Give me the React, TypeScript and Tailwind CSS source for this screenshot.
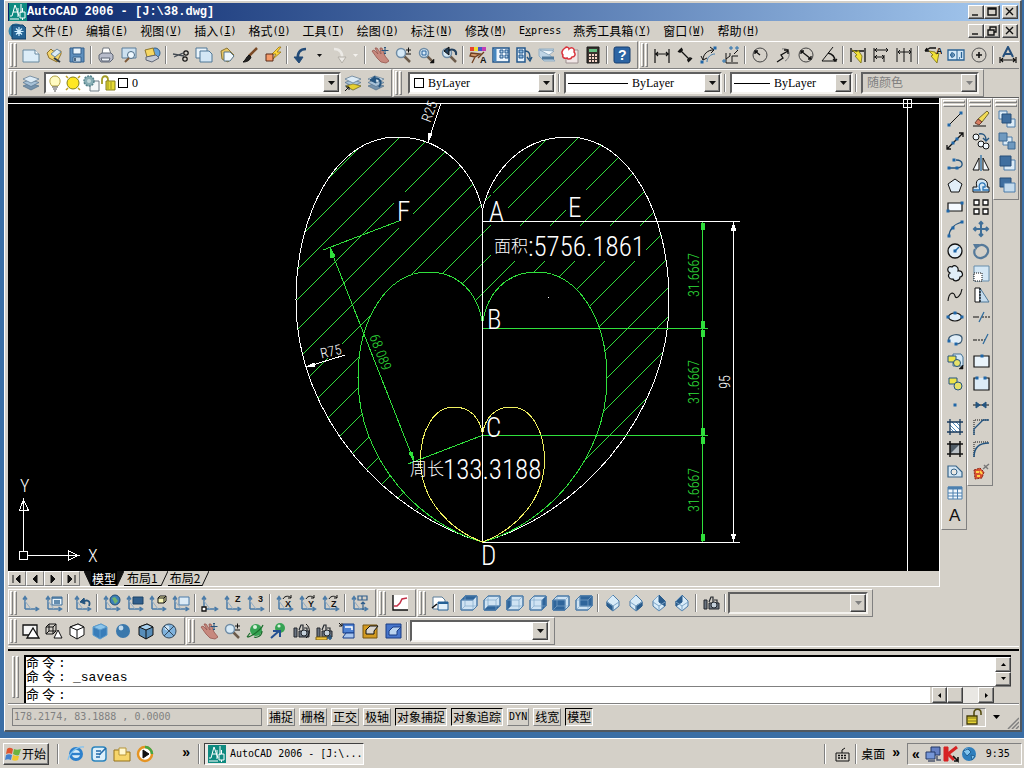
import React from "react";

const K = "#111";
const B = "#24547f";
const M = "#4a7ba8";
const L = "#cfe3f3";

type PProps = { d: string; s?: string; f?: string; w?: number; dash?: string };
const P = ({ d, s = K, f = "none", w = 1, dash }: PProps) => (
  <path d={d} stroke={s} fill={f} strokeWidth={w} strokeDasharray={dash} />
);

const Ucs = () => (
  <>
    <P d="M3 15V3M1 5.500l2-3 2 3M3 15h13M13.500 13l3 2-3 2" s={M} w={1.5} />
    <P d="M3 7l6 8" s="#8fabc4" />
  </>
);

const Cube = ({ hi }: { hi: string }) => {
  const faces: Record<string, string> = {
    top: "M1 6l4-4h12l-4 4z",
    bottom: "M1 16l4-4h12l-4 4z",
    left: "M1 6l4-4v10l-4 4z",
    right: "M13 6l4-4v10l-4 4z",
    front: "M1 6h12v10H1z",
    back: "M5 2h12v10H5z",
  };
  return (
    <>
      <P d="M1 6l4-4h12v10l-4 4H1z" f={L} s={M} />
      <P d={faces[hi]} f="#2f659b" s="#2f659b" />
      <P d="M1 6h12v10M13 6l4-4M5 2v10M5 12h12M5 12l-4 4" s="#7fa6c8" w={0.7} />
      <P d="M1 6l4-4h12v10l-4 4H1z" s={M} />
    </>
  );
};

const Iso = ({ hi }: { hi: string }) => {
  const faces: Record<string, string> = {
    sw: "M3 8l6 4v5l-6-5z",
    se: "M15 8l-6 4v5l6-5z",
    ne: "M9 1l6 6v5l-6-4z",
    nw: "M9 1L3 7v5l6-4z",
  };
  return (
    <>
      <P d="M9 1l6 6v5l-6 5-6-5V7z" f="#d8ebf8" s={M} />
      <P d={faces[hi]} f="#2a5c8c" s="#2a5c8c" />
      <P d="M3 8l6 4 6-4M9 12v5M3 7l6-6" s="#7fa6c8" />
    </>
  );
};

const Solid = ({ f, s, top }: { f: string; s: string; top: string }) => (
  <>
    <P d="M2 5l8-3 6 3v8l-7 4-7-4z" f={f} s={s} />
    <P d="M2 5l8-3 6 3-7 3z" f={top} s={s} />
    <P d="M9 8v9" s={s} />
  </>
);

const Lens = () => (
  <>
    <P d="M10 10l6 6" s="#6b5b4b" w={2.5} />
    <circle cx="7" cy="7" r="4.500" fill="#d6e9f6" stroke="#6f8ca5" strokeWidth="1.500" />
  </>
);

const Hand = () => (
  <>
    <P d="M1 5l2-1 4 4-3-6 2 0 4 6-1-6 2 0 3 8 4 5-3 2-5-1-4-4z" f="#c7897e" s="#96574f" w={0.8} />
    <P d="M14 1v7M10.500 4.500h7M13 2l1-1 1 1M13 7l1 1 1-1" s="#29547d" />
  </>
);

const Camera = () => (
  <>
    <P d="M2 6h3v9H2zM7 9h10v6H7z" f="#6a7480" s="#22272d" />
    <P d="M7 8l2-5h2v5M12 6h3v3" s="#22272d" w={1.2} />
    <circle cx="12" cy="11" r="3" fill="#c4d0da" stroke="#22272d" />
  </>
);

const Layers = () => (
  <>
    <P d="M1 12l7-3 9 3-8 4z" f="#7592ac" s="#56728c" w={0.7} />
    <P d="M1 8.500l7-3 9 3-8 4z" f="#a8c2d8" s="#56728c" w={0.7} />
    <P d="M1 5l7-3 9 3-8 4z" f="#dcebf6" s="#56728c" w={0.7} />
  </>
);

const Ball = ({ f, r = 7 }: { f: string; r?: number }) => (
  <>
    <circle cx="9" cy="9" r={r} fill={f} />
    <circle cx="7" cy="6" r={r * 0.35} fill="#e6f3fb" opacity=".8" />
  </>
);

const Dots = ({ pts }: { pts: number[][] }) => (
  <>
    {pts.map(([x, y]) => (
      <rect key={`${x}-${y}`} x={x - 1.5} y={y - 1.5} width="3" height="3" fill="#1f66a8" />
    ))}
  </>
);

const Label = ({ x, y, t }: { x: number; y: number; t: string }) => (
  <text x={x} y={y} fill={K} className="font-['Liberation_Sans'] text-[9px] font-bold">
    {t}
  </text>
);

const ACAD = (
  <>
    <rect width="18" height="18" fill="#0f8a80" />
    <P d="M1 13h2L6 2l4 11M4 9h5M1 16h9M12 1v9M9 5v9" s="#fff" />
    <P d="M11 9h5v6h-5zM13.500 15v2M13.500 5v4" s="#fff" />
  </>
);

const ICONS: Record<string, React.ReactNode> = {
  新建: <><P d="M1 4h12l4 4v8H1z" f="#dcedf8" s="#66889f" /><P d="M13 4v4h4" s="#66889f" f="#fff" /></>,
  打开: <><P d="M2 7l4-4 2 2h8v3L12 16 4 12z" f="#f3d46b" s="#8d702a" /><P d="M6 8l6-5 4 3-6 5z" f="#dcecf6" s="#6c8aa0" /><P d="M9 12l6 4" s="#303a44" w={2} /></>,
  保存: <><P d="M2 2h14v14H2z" f="#5e8fbd" s="#34618c" /><P d="M5 2h8v6H5z" f="#eaf4fb" s="#34618c" /><P d="M5 11h8v5H5z" f="#c4d8e8" s="#34618c" /><P d="M7 12v3" s="#24425f" w={1.5} /></>,
  打印: <><P d="M5 8l1-6h6l2 6z" f="#fff" s="#70777f" /><P d="M2 9l3-2h9l2 2v4l-3 3H4l-2-3z" f="#b8bccb" s="#5f6675" /><P d="M4 12h9l-1 3H5z" f="#eef2f8" s="#5f6675" /></>,
  打印预览: <><P d="M2 2h14v10H2z" f="#cde1f0" s="#5b7d99" /><circle cx="11" cy="9" r="3.500" fill="#eef8ff" stroke="#4b6a84" /><P d="M9 12l-4 4" s="#7f5a38" w={2} /></>,
  发布: <><circle cx="12" cy="7" r="5" fill="#66a3d9" stroke="#345d84" /><P d="M2 4l8-2 2 7-8 2z" f="#f6d763" s="#8d762c" /><P d="M3 11l10-2 3 3-7 4-6-2z" f="#c6cbd6" s="#5f6675" /></>,
  剪切: <><P d="M1 8l11 2M2 11l9-4" s="#444b53" w={1.3} /><circle cx="14" cy="7" r="2.200" fill="none" stroke={K} strokeWidth="1.200" /><circle cx="13" cy="13" r="2.200" fill="none" stroke={K} strokeWidth="1.200" /></>,
  复制: <><P d="M1 2h11v10H1z" f="#eaf4fb" s="#4f7796" /><P d="M5 5h9l3 3v8H5z" f="#d4e7f5" s="#4f7796" /></>,
  粘贴: <><P d="M3 5l6-3 7 7-6 7-6-3z" f="#e8c663" s="#8b7533" /><P d="M6 6h6l4 4-4 5H6z" f="#eff7fc" s="#587487" /></>,
  特性匹配: <><P d="M16 2L8 10" s="#7a4a26" w={2.5} /><P d="M8 9l2 2c-1 4-5 5-8 5 3-2 3-5 6-7z" f="#222" /></>,
  块编辑器: <><P d="M15 1L8 8h4l-3 5 8-7h-4l4-5z" f="#ffd93b" s="#9a7412" w={0.8} /><P d="M2 8h7v7H2z" f="#f49a69" s="#5b2a19" /></>,
  放弃: <><P d="M13 3C7 3 4 7 5 13" s="#234b77" w={2.6} /><P d="M1 11l5 6 4-6z" f="#234b77" s="#234b77" /></>,
  重做: <><P d="M5 3c6 0 9 4 8 10" s="#eceae6" w={2.6} /><P d="M9 11l4 6 4-6z" f="#eceae6" s="#b3afa7" /></>,
  平移: <Hand />,
  实时缩放: <><Lens /><P d="M12 4h5M14.500 1.500v5M12 8h5" /></>,
  窗口缩放: <><Lens /><P d="M5 5h4v4H5z" s="#245f99" /><P d="M17 17v-4l-4 4z" f={K} w={0.5} /></>,
  缩放上一个: <><Lens /><P d="M16 9c1-5-4-7-8-4" s="#24425f" w={2} /><P d="M9 1L4 5l5 4z" f="#24425f" /></>,
  特性: <><P d="M1 1h4v4H1z" f="#e6442f" s="none" /><P d="M5 1h4v4H5z" f="#eede31" s="none" /><P d="M9 1h4v4H9z" f="#4b53c9" s="none" /><P d="M13 1h4v4h-4z" f="#c23cb4" s="none" /><P d="M2 7l9 1-5 3-5-1zM6 11l-3 6M15 6l-6 6" f="#d49b6c" s="#704021" w={1.3} /><Label x={11} y={17} t="A" /></>,
  设计中心: <><P d="M1 2h16v14H1z" f="#eef6fd" s="#23578c" w={1.5} /><P d="M3 3v12" s="#4486bf" w={3} /><P d="M8 4h3v3H8zM13 4h3v3h-3zM8 9h3v3H8zM13 9h3v3h-3z" s="#23578c" f="#b9d3ea" /></>,
  工具选项板: <><P d="M2 2h8v14H2z" f="#e3f0fa" s="#23578c" w={1.5} /><P d="M4 4h4v3H4zM4 9h4v3H4z" s="#23578c" f="#8bb8dc" /><P d="M10 5c5 0 5 4 5 8M12 11l3 4 2-4" s={B} w={1.4} /></>,
  图纸集: <><P d="M1 3h15l-5 5 6 7H6L1 10z" f="#bfd4e4" s="#93aec3" /><P d="M2 4l14 1-5 4z" f="#f0f7fc" s="#7998b2" w={0.7} /><P d="M4 12l12 0" s="#51799b" w={3} /></>,
  标记集: <><P d="M5 4h12v13H5z" f="#f1e7e7" s="#9c8f8f" /><path d="M4 2c2-2 4 0 4 1 3-3 6 0 5 3 2 2 1 5-2 5-1 3-5 2-5 1-3 1-5-1-4-3-2-2-1-5 2-7z" fill="#fff" stroke="#d9333c" strokeWidth="1.500" /></>,
  计算器: <><P d="M3 1h12v16H3z" f="#39332f" s="#161616" /><P d="M5 3h8v3H5z" f="#65c082" s="none" /><P d="M5 9h8M5 12h8M5 15h8" s="#f4d4c8" w={2} dash="2 1" /></>,
  帮助: <><rect x="1" y="1" width="16" height="16" rx="2" fill="#2c64a3" stroke="#173f70" /><text x="5" y="14" fill="#fff" className="font-['Liberation_Sans'] text-[14px] font-bold">?</text></>,
  线性标注: <P d="M2 3v14M16 3v14M3 8h12M5 6L3 8l2 2M13 6l2 2-2 2" w={1.2} />,
  对齐标注: <P d="M2 6l4-4M12 16l4-4M4 4l10 10M4 7V4h3M14 11v3h-3" w={1.3} />,
  弧长标注: <><P d="M4 14C4 8 9 4 14 4M2 10L4 14l4-2M11 1l4 3-3 3" /><P d="M8 16c0-5 4-8 8-8" s="#477faf" /><Dots pts={[[3, 16], [16, 2]]} /></>,
  坐标标注: <><P d="M4 7v10h12M4 13l4-3v-3M10 16v-6h6M12 8l4-4" /><P d="M8 1h2v2H8zM14 1h2v2h-2zM1 14h2v2H1z" s="#2870ad" /></>,
  半径标注: <><circle cx="9" cy="9" r="7" fill="none" stroke="#444" /><P d="M9 9L4 5M4 8V5h3" w={1.4} /></>,
  折弯标注: <><P d="M8 3c9-2 9 9 3 12" s="#777" /><P d="M3 16l6-4-2-3 7-4M10 4h4v4" w={1.3} /></>,
  直径标注: <><circle cx="9" cy="9" r="7" fill="none" stroke="#444" /><P d="M4 5l10 8M4 8V5h3M14 10v3h-3" w={1.3} /></>,
  角度标注: <><P d="M13 1L2 15h15" /><P d="M8 7c4 1 7 4 7 8M13 13l2 2 2-2" w={1.3} /></>,
  快速标注: <><P d="M2 2v14M16 2v14M3 5h12" w={1.3} /><P d="M3 4l5 2 1-2 4 6-1 7-6-7 2-1z" f="#f3e237" s="#776d12" w={0.8} /></>,
  基线标注: <P d="M2 2v14M2 4h14M2 11h10M12 9v7M5 2L3 4l2 2M5 9l-2 2 2 2M14 2l2 2-2 2M10 9l2 2-2 2" />,
  连续标注: <P d="M2 2v14M9 2v14M16 2v14M3 6h12M5 4L3 6l2 2M14 4l2 2-2 2" />,
  快速引线: <><P d="M1 5l5-3h6M1 5h4M1 5l2-3" w={1.3} /><P d="M5 5l6 1 1 2 3-1-2 10-6-7 2-1z" f="#f3e237" s="#776d12" w={0.8} /><Label x={12} y={8} t="A" /></>,
  公差: <><P d="M1 4h16v10H1z" f="#d4e9f8" s="#2b6394" w={1.3} /><P d="M10 4v10M5 6v6M3 9h5" s="#2b6394" /><circle cx="5.500" cy="9" r="2" fill="none" stroke="#2b6394" /><P d="M14.500 6v6M12 12h1" s="#2b6394" w={1.3} /></>,
  圆心标记: <><circle cx="9" cy="9" r="7" fill="none" stroke="#555" /><P d="M9 6v6M6 9h6" w={1.6} /></>,
  编辑标注: <><P d="M4 11L9 1l5 10M6 8h6" s="#254f7c" w={2} /><P d="M1 11v6M17 11v6M2 14h14M4 12l-2 2 2 2M14 12l2 2-2 2" w={1.2} /></>,
  图层特性: <Layers />,
  置为当前: <><Layers /><P d="M2 12l7-2 8 2-8 4z" f="#e5cf31" s="#89791e" w={0.7} /><P d="M1 17l4-4M2 13h3v3" /></>,
  上一图层: <><Layers /><P d="M12 13c4-6-1-11-6-7" s="#24547f" w={2} /><P d="M8 2L3 6l6 3z" f="#24547f" s="#24547f" /></>,
  灯: <><path d="M6 12C2 8 4 2 9 2s7 6 3 10z" fill="#fffbc2" stroke="#b5a445" /><P d="M6 13h6M7 15h4M8 17h2" s="#555" /></>,
  太阳: <><circle cx="9" cy="9" r="6" fill="#ffe724" stroke="#84801c" /><P d="M2 2l2 2M16 2l-2 2M2 16l2-2M16 16l-2-2" s="#bd9e20" w={1.5} /></>,
  视口冻结: <><P d="M8 7h9v10H8z" f="#f5f7f8" s="#6d7b84" /><circle cx="7" cy="7" r="5" fill="#87adb4" stroke="#55838c" strokeDasharray="2 1" strokeWidth="1.500" /><circle cx="7" cy="7" r="2" fill="#c2d8da" /></>,
  锁: <><path d="M2 10V6c0-5 6-5 6 0v1" fill="none" stroke="#a49c25" strokeWidth="1.800" /><P d="M6 7h9v9H6z" f="#e5db35" s="#857e1d" /><P d="M8 8v7M11 8v7" s="#9f9623" /></>,
  金锁: <><path d="M9 8V5c0-5 7-5 7 0v2" fill="none" stroke="#554d12" strokeWidth="1.600" /><P d="M2 8h10v8H2z" f="#e7d435" s="#443d0c" w={1.3} /><P d="M3 10h8M3 13h8" s="#82781d" /></>,
  直线: <><P d="M3 15L15 3" /><Dots pts={[[3, 15], [15, 3]]} /></>,
  构造线: <><P d="M1 17L17 1M1 13v4h4M13 1h4v4" w={1.3} /><Dots pts={[[7, 11], [11, 7]]} /></>,
  多段线: <><P d="M3 14h8c7 0 7-8-1-8" s={B} w={1.3} /><Dots pts={[[3, 14], [11, 14], [8, 6]]} /></>,
  正多边形: <P d="M9 3l7 5-3 8H5L2 8z" f="#e1eef8" />,
  矩形: <><P d="M2 5h14v8H2z" f="#f5faff" w={1.2} /><Dots pts={[[2, 13], [16, 5]]} /></>,
  圆弧: <><P d="M3 16C3 10 8 4 16 2" s={B} w={1.2} /><Dots pts={[[3, 16], [7, 8], [16, 2]]} /></>,
  圆: <><circle cx="9" cy="9" r="7" fill="#e1eef8" stroke={K} strokeWidth="1.300" /><P d="M9 9l4-4" s="#2870ad" w={1.5} /><Dots pts={[[9, 9]]} /></>,
  修订云线: <path d="M4 9C0 7 2 1 6 3c3-3 7 0 6 4 5-1 6 6 2 6 0 4-6 5-7 2-4 1-6-4-3-6z" fill="#e1eef8" stroke={K} strokeWidth="1.200" />,
  样条曲线: <P d="M2 15C3 5 8 6 9 10s6 0 7-7" w={1.1} />,
  椭圆: <><ellipse cx="9" cy="9" rx="6.500" ry="4" fill="#e1eef8" stroke={K} strokeWidth="1.200" /><Dots pts={[[2, 9], [16, 9], [9, 5]]} /></>,
  椭圆弧: <><path d="M3 11C0 4 17 2 16 9c0 4-3 5-6 5" fill="#e1eef8" stroke="#3b5972" strokeWidth="1.200" /><Dots pts={[[3, 11], [10, 14]]} /></>,
  插入块: <><P d="M7 2h8l2 3v9H7z" f="#d4e7f5" s="#477395" /><P d="M2 4h8v6H2z" f="#eee34b" s={B} /><circle cx="11" cy="11" r="3.500" fill="#e7e169" stroke={B} /><P d="M17 17v-4l-4 4z" f={K} w={0.5} /></>,
  创建块: <><P d="M3 4h8v6H3z" f="#eee34b" s={B} /><circle cx="12" cy="12" r="4" fill="#e7e169" stroke={B} /></>,
  点: <Dots pts={[[9, 9]]} />,
  图案填充: <><P d="M4 4h10v10H4z" f="#fff" s="none" /><P d="M4 7l7 7M4 10l4 4M6 4l8 8M10 4l4 4" s="#528bbd" /><P d="M4 1v16M14 1v16M1 4h16M1 14h16" s="#17395c" w={1.3} /></>,
  渐变色: <><P d="M4 4h10v10H4z" f="#4f5b65" s="none" /><P d="M4 14L14 4v10z" f="#bbc2c7" s="none" /><P d="M4 1v16M14 1v16M1 4h16M1 14h16" w={1.5} /></>,
  面域: <><P d="M2 4h8l6 6v5H2z" f="#d4e7f5" s="#386589" w={1.2} /><circle cx="8" cy="10" r="3" fill="#ece9e3" stroke="#386589" /></>,
  表格: <><P d="M2 3h14v12H2z" f="#f2f8fd" s="#4d80af" /><P d="M2 4h14" s="#4d80af" w={3} /><P d="M2 9h14M2 12h14M7 3v12M11.500 3v12" s="#4d80af" /></>,
  多行文字: <text x="3" y="15" fill={K} className="font-['Liberation_Sans'] text-[17px]">A</text>,
  删除: <><P d="M1 16h13" /><P d="M15 1l2 2-7 9-4-3z" f="#f2db55" s="#6f662f" /><P d="M6 9l4 3-3 3-4-2z" f="#d77c61" s="#70402f" /></>,
  复制对象: <><circle cx="4" cy="5" r="3" fill="#f0f7fc" stroke={K} /><circle cx="9" cy="12" r="3" fill="#f0f7fc" stroke={K} /><circle cx="14" cy="14" r="3" fill="#f0f7fc" stroke={K} /><P d="M7 2c5-1 7 2 7 6M11 6l3 3 3-3" s={B} w={1.4} /></>,
  镜像: <><P d="M7 4v12H1zM11 4v12h6z" f="#f3f8fc" /><P d="M9 1v16" s="#3777ad" w={1.4} /></>,
  偏移: <><path d="M1 16v-5h4C3 5 6 3 9 3s8 2 6 8h2v5z" fill="#d4e7f5" stroke={K} /><path d="M1 14h7c-4-9 7-9 5-3h-2v3h6" fill="none" stroke="#2b74b4" strokeWidth="1.300" /></>,
  阵列: <P d="M2 2h5v5H2zM11 2h5v5h-5zM2 11h5v5H2zM11 11h5v5h-5z" f="#fff" w={1.3} />,
  移动: <P d="M9 2v14M2 9h14M7 4l2-2 2 2M7 14l2 2 2-2M4 7L2 9l2 2M14 7l2 2-2 2" s="#3f6f99" w={2} />,
  旋转: <><path d="M5 5c5-5 12 0 11 5s-9 9-13 3c-1-2-1-4 0-6" fill="none" stroke="#55799a" strokeWidth="2.200" /><P d="M1 2l7 0-4 6z" f="#55799a" s="none" /></>,
  缩放: <><P d="M2 2h15v15H2z" f="#d4e7f5" s="#668dab" /><P d="M2 9h8v8H2z" f="#fff" dash="1 1" /></>,
  拉伸: <><P d="M3 2h5v14H3z" f="#fff" /><P d="M8 2l9 14H8z" f="#c6dced" s="#4d7797" /><P d="M8 2v14" dash="2 1" w={1.2} /></>,
  修剪: <><P d="M1 9h6" /><P d="M10 9h8" dash="2 1" /><P d="M7 14L12 4" s="#2e6b9d" w={1.2} /></>,
  延伸: <><P d="M1 10h4" /><P d="M6 10h7" dash="2 1" /><P d="M11 14L16 4" s="#2e6b9d" w={1.2} /></>,
  打断于点: <><P d="M2 4h15v11H2z" f="#eaf4fb" w={1.2} /><Dots pts={[[10, 4]]} /></>,
  打断: <><P d="M5 4H2v12h15V4h-3" f="#dcebf6" w={1.2} /><Dots pts={[[5, 4], [13, 4]]} /></>,
  合并: <><P d="M1 9h16" /><P d="M4 6l4 3-4 3zM14 6l-4 3 4 3z" f={B} s={B} /></>,
  倒角: <><P d="M2 17V2h15" dash="1 1" /><P d="M2 17v-6l9-9h6" s={B} w={1.3} /></>,
  圆角: <><P d="M2 17V2h15" dash="1 1" /><P d="M2 17C2 8 7 3 17 3" s={B} w={1.5} /></>,
  分解: <><P d="M2 8l6-2 4 4-2 6-7 1z" f="#d84f2f" s="#8d291a" dash="2 1" /><P d="M4 10h3M8 9l2 3M5 14h3" s="#ffd44a" w={2} /><P d="M11 7l6-5M12 3l4 4" s="#777" w={1.4} /></>,
  前置: <><P d="M1 1h8v8H1z" f="#dcebf6" s={M} /><P d="M9 9h8v8H9z" f="#dcebf6" s={M} /><P d="M4 4h9v9H4z" f="#406f9f" s="#264e78" /></>,
  后置: <><P d="M5 5h9v8H5z" f="#dcebf6" s={M} /><P d="M1 1h8v8H1z" f="#6f99bf" s="#3f6991" /><P d="M10 10h7v7h-7z" f="#6f99bf" s="#3f6991" /></>,
  置于对象之上: <><P d="M6 6h11v10H6z" f="#dcebf6" s={M} /><P d="M2 2h11v10H2z" f="#406f9f" s="#264e78" /></>,
  置于对象之下: <><P d="M2 2h11v9H2z" f="#406f9f" s="#264e78" /><P d="M6 7h11v9H6z" f="#c4dbed" s={M} /></>,
  UCS: <Ucs />,
  命名UCS: <><Ucs /><P d="M7 3h10v8H7z" f="#eaf4fb" s="#386b97" /><P d="M7 4h10M9 7h6M9 9h6" s="#386b97" w={1.5} /></>,
  上一个UCS: <><Ucs /><P d="M15 12c2-5-2-7-6-4" s={B} w={1.8} /><P d="M10 4L6 8l5 2z" f={B} s={B} /></>,
  世界UCS: <><Ucs /><circle cx="12" cy="6" r="5" fill="#3b7fb9" stroke="#204b72" /><P d="M9 4l3-1 3 4-3 3z" f="#70b26d" s="none" /></>,
  对象UCS: <><Ucs /><P d="M7 3h10v7H7z" f="#315f8c" s="#1d4266" /></>,
  面UCS: <><Ucs /><P d="M9 4l2-2h6v5l-2 2H9z" f="#fbf8b8" /><P d="M9 4h6v5M15 4l2-2" /></>,
  视图UCS: <><Ucs /><P d="M7 3h10v8H7z" f="#dcebf6" s={M} /></>,
  原点UCS: <><Ucs /><P d="M1 13h4v4H1z" f="#fff" w={1.3} /></>,
  Z轴矢量: <><Ucs /><Label x={11} y={8} t="Z" /></>,
  三点UCS: <><Ucs /><Label x={11} y={8} t="3" /></>,
  绕X: <><Ucs /><P d="M7 5c2-4 7-3 8-1M15 1v3h-3" /><Label x={9} y={13} t="X" /></>,
  绕Y: <><Ucs /><P d="M7 5c2-4 7-3 8-1M15 1v3h-3" /><Label x={9} y={13} t="Y" /></>,
  绕Z: <><Ucs /><P d="M7 5c2-4 7-3 8-1M15 1v3h-3" /><Label x={9} y={13} t="Z" /></>,
  应用UCS: <><Ucs /><P d="M7 2h9v4H7zM11 2v4M12 16V8M10 10l2-2 2 2" s="#315f8c" w={1.2} /></>,
  曲线: <><P d="M2 1h15v15H2z" f="#fff" s="none" /><P d="M2 1v15h15" w={1.4} /><P d="M3 12h3l3-3 2-4 5-1" s="#c33147" w={1.5} /></>,
  命名视图: <><P d="M2 3h9l3 3v9H2z" f="#fff" s="#5a7d99" /><P d="M7 8h10v8H7z" f="#e3f0fa" s="#246096" /><P d="M7 9h10" s="#246096" w={2} /><P d="M1 14l5-4" w={1.6} /></>,
  俯视: <Cube hi="top" />,
  仰视: <Cube hi="bottom" />,
  左视: <Cube hi="left" />,
  右视: <Cube hi="right" />,
  主视: <Cube hi="front" />,
  后视: <Cube hi="back" />,
  西南: <Iso hi="sw" />,
  东南: <Iso hi="se" />,
  东北: <Iso hi="ne" />,
  西北: <Iso hi="nw" />,
  相机: <Camera />,
  二维线框: <><P d="M1 3h14v10H1z" f="#f6f6f6" w={1.3} /><P d="M5 16l6-10 6 10z" f="#fff" w={1.3} /></>,
  三维线框: <><P d="M1 5l3-3h7v7l-3 3H1zM1 5h7v7M8 5l3-3M4 2v7h7M4 9l-3 3" /><P d="M9 16l4-8 4 8z" f="#fff" /></>,
  消隐: <Solid f="#fff" top="#fff" s={K} />,
  平面着色: <Solid f="#397db9" top="#8cc5eb" s="#5a9bcc" />,
  体着色: <Ball f="#3a78ac" />,
  带边框平面: <Solid f="#578db9" top="#a9d1ee" s={K} />,
  带边框体: <><Ball f="#7fb2dc" /><circle cx="9" cy="9" r="7" fill="none" stroke="#34495c" /><P d="M4 4l10 10M14 4L4 14" s="#34495c" /></>,
  三维平移: <Hand />,
  三维缩放: <><Lens /><P d="M12 4h5M14.500 1.500v5M12 8h5" /></>,
  动态观察: <><circle cx="10" cy="8" r="6" fill="#36a353" /><circle cx="9" cy="5" r="2" fill="#d9f1dd" /><P d="M1 15c4 0 14-7 16-12M1 15l3-4M8 15c3 1 8-1 8-6" s="#1c6b2c" w={1.2} /></>,
  连续观察: <><circle cx="11" cy="6" r="5" fill="#36a353" /><circle cx="10" cy="4" r="1.600" fill="#d9f1dd" /><P d="M2 16l8-7M4 9h7v6" s="#234f91" w={2} /></>,
  旋转相机: <><Camera /><P d="M14 2c5 4 4 11 0 14" /></>,
  调整距离: <><Camera /><P d="M1 15h11v3H1z" f="#f1c43b" s="#7f6419" /><P d="M12 16h5M15 13v5" s={B} w={1.5} /></>,
  调整剪裁: <><P d="M5 2h11v9H5z" f="#4e82d3" s="#163d87" /><P d="M5 15l3-4h8v5H5z" f="#a9c6ee" s="#163d87" /><P d="M7 5h7v3" s="#fff" w={1.5} /><P d="M1 1l3 3M4 1v3H1" /></>,
  前向剪裁: <><P d="M2 3h14v13H2z" f="#d39b22" s="#76550e" /><P d="M5 8l4-4h8l-4 5v3H5z" f="#d9d5ce" /></>,
  后向剪裁: <><P d="M2 2h15v14H2z" f="#4675cb" s="#193d84" /><P d="M5 9l4-4h8l-4 4v4H5z" f="#b9d3ef" s="#193d84" /></>,
  浏览器: <><circle cx="9" cy="9" r="5.500" fill="#d8ecf9" stroke="#2d80cc" strokeWidth="3" /><P d="M4 9h11" s="#2d80cc" w={2.4} /><P d="M1 15C2 8 10 1 17 2" s="#82c2ef" w={1.4} /></>,
  邮件: <><rect x="2" y="2" width="14" height="14" rx="3" fill="#dceffa" stroke="#2b84bd" strokeWidth="1.500" /><P d="M6 6h5M6 9h5M6 12h4M9 10l7-7" s="#246ba9" w={1.6} /></>,
  文件夹: <><P d="M1 5h6l2 2h8v9H1z" f="#f6d56b" s="#95721c" /><P d="M6 3h7v7H6z" f="#fff7ce" s="#b79537" /></>,
  播放器: <><circle cx="9" cy="9" r="7" fill="#fff" stroke="#e59423" strokeWidth="2.500" /><path d="M9 2a7 7 0 0 1 7 7" stroke="#43a746" strokeWidth="2.500" fill="none" /><P d="M7 5l6 4-6 4z" f={K} /></>,
  键盘: <><P d="M3 8h13v8H3zM9 8V5l3-2" /><P d="M5 10.500h9M5 13h9" w={1.5} dash="2 1" /></>,
  网络: <><P d="M7 2h9v8H7z" f="#6580c3" s="#243967" /><P d="M2 7h9v7H2z" f="#7697d8" s="#243967" /><P d="M4 16h7M13 11v4h4" s="#4c566d" w={1.5} /></>,
  杀毒: <><P d="M2 2h4v14H2z" f="#d72323" s="#d72323" /><P d="M15 2L6 9l6 6" s="#d72323" w={3} /><P d="M11 11l5 5v-4M16 16h-4" w={1.6} /></>,
  地球: <><Ball f="#2f7fbd" /><P d="M3 6l5-2 3 3-4 4zM11 10l4 1-3 4z" f="#81c5ef" s="#226194" /></>,
  主页: ACAD,
  图形: <><circle cx="8" cy="9" r="7.500" fill="#3184ad" /><P d="M4 3h11l3 3v11H4z" f="#256393" s="#123e67" /><P d="M11 5v9M6.500 9.500h9M8 6.500l6 6M14 6.500l-6 6" s="#d3f0ff" w={1.2} /></>,
};

const Icon = ({ name }: { name: string }) => (
  <svg viewBox="0 0 18 18" className="block size-[18px] shrink-0" aria-hidden="true">
    {ICONS[name]}
  </svg>
);

const RAISED = "border border-t-white border-l-white border-b-[#808080] border-r-[#808080]";
const SUNKEN = "border border-t-[#808080] border-l-[#808080] border-b-white border-r-white";
const BUTTON3D =
  "border border-t-white border-l-white border-b-[#404040] border-r-[#404040] bg-[#d4d0c8] shadow-[inset_-1px_-1px_0_#808080]";

const Grip = ({ row = false }: { row?: boolean }) =>
  row ? (
    <span className="flex h-[9px] shrink-0 flex-col gap-px pt-px">
      <span className={`h-[3px] ${RAISED}`} />
      <span className={`h-[3px] ${RAISED}`} />
    </span>
  ) : (
    <span className="flex w-[10px] shrink-0 gap-px self-stretch py-px pl-px">
      <span className={`w-[3px] ${RAISED}`} />
      <span className={`w-[3px] ${RAISED}`} />
    </span>
  );

const Sep = () => (
  <span className="flex w-[6px] shrink-0 justify-center self-stretch py-1">
    <span className="w-[2px] border-l border-r border-l-[#808080] border-r-white" />
  </span>
);

const Drop = ({ label, dim = false }: { label: string; dim?: boolean }) => (
  <button aria-label={label} className="flex w-[13px] shrink-0 justify-center self-stretch items-center">
    <svg viewBox="0 0 5 3" className="h-[3px] w-[5px]">
      <path d="M0 0h5L2.500 3z" fill={dim ? "#f4f2ee" : K} />
    </svg>
  </button>
);

const Tools = ({ items }: { items: string }) => (
  <>
    {items.split(" ").map((n, i) => {
      if (n === "|") return <Sep key={i} />;
      if (n === "v") return <Drop key={i} label="放弃列表" />;
      if (n === "w") return <Drop key={i} label="重做列表" dim />;
      return (
        <button key={i} aria-label={n} className="flex h-[22px] w-[23px] shrink-0 items-center justify-center">
          <Icon name={n} />
        </button>
      );
    })}
  </>
);

const Bar = ({ children }: { children: React.ReactNode }) => (
  <div role="toolbar" className={`flex shrink-0 items-center pr-1 ${RAISED}`}>
    <Grip />
    {children}
  </div>
);

const Column = ({ items }: { items: string }) => (
  <div role="toolbar" className={`flex w-[26px] flex-col px-px pb-[3px] ${RAISED}`}>
    <Grip row />
    <Tools items={items} />
  </div>
);

const Arrow = ({ dim = false }: { dim?: boolean }) => (
  <span className={`flex w-4 shrink-0 items-center justify-center self-stretch ${BUTTON3D}`} aria-hidden="true">
    <svg viewBox="0 0 7 4" className="h-1 w-[7px]">
      <path d="M0 0h7L3.500 4z" fill={dim ? "#808080" : K} />
    </svg>
  </span>
);

type ComboProps = { label: string; value: string; width: string; dim?: boolean; children?: React.ReactNode };
const Combo = ({ label, value, width, dim = false, children }: ComboProps) => (
  <div
    className={`flex h-[22px] shrink-0 items-center border-2 border-t-[#606060] border-l-[#606060] border-b-[#f4f2ee] border-r-[#f4f2ee] ${width} ${
      dim ? "bg-[#d4d0c8] text-[#808080]" : "bg-white text-black"
    }`}
  >
    {children}
    <select
      aria-label={label}
      disabled={dim}
      className="h-[18px] min-w-0 flex-1 appearance-none bg-transparent pl-1 font-['Liberation_Serif','Noto_Sans_CJK_SC',serif] text-[12px] leading-[18px] opacity-100 outline-none"
    >
      <option>{value}</option>
    </select>
    <Arrow dim={dim} />
  </div>
);

const MENUS: [string, string][] = [
  ["文件", "F"], ["编辑", "E"], ["视图", "V"], ["插入", "I"], ["格式", "O"], ["工具", "T"], ["绘图", "D"],
  ["标注", "N"], ["修改", "M"], ["", "Express"], ["燕秀工具箱", "Y"], ["窗口", "W"], ["帮助", "H"],
];

const WinButton = ({ label, d, gap = false }: { label: string; d: string; gap?: boolean }) => (
  <button
    aria-label={label}
    className={`flex h-[14px] w-4 items-center justify-center ${BUTTON3D} ${gap ? "ml-[2px]" : ""}`}
  >
    <svg viewBox="0 0 10 10" className="size-[10px]">
      <path d={d} stroke={K} fill="none" strokeWidth="1.400" />
    </svg>
  </button>
);

const OUTER =
  "M482.500 210C476 180 450 137 397 137C335 137 296 215 296 300C296 420 390 516 482.500 542C575 516 669 420 669 300C669 215 630 137 568 137C515 137 489 180 482.500 210Z";
const MIDDLE =
  "M482.500 324C478 292 458 272 428 272C388 272 358 318 358 378C358 460 420 525 482.500 542C545 525 607 460 607 378C607 318 577 272 537 272C507 272 487 292 482.500 324Z";
const INNER =
  "M482.500 434C480 418 470 407 454 407C434 407 420.500 430 420.500 460C420.500 500 450 530 482.500 542C515 530 544.500 500 544.500 460C544.500 430 531 407 511 407C495 407 485 418 482.500 434Z";
const GAPS = "M394 192h19v36h-19zM491 193h17v33h-17zM566 190h20v28h-20zM491 226h155v35H491zM318 340h24v18h-24z";
const HATCH = Array.from({ length: 19 }, (_, k) => Math.round(507 + 29.9 * k));
const GREEN = "#30e03c";

const Drawing = () => (
  <svg
    viewBox="8 98 931 474"
    preserveAspectRatio="xMinYMin slice"
    className="block min-h-0 w-full flex-1 basis-0 bg-black font-['Roboto_Condensed','Liberation_Sans_Narrow',Roboto,'Noto_Sans_CJK_SC',sans-serif] font-light"
    role="img"
    aria-label="38.dwg"
  >
    <clipPath id="hatch">
      <path d={OUTER + MIDDLE + GAPS} clipRule="evenodd" />
    </clipPath>
    <g shapeRendering="crispEdges" fill="none" stroke="#fff">
      <g clipPath="url(#hatch)" stroke={GREEN}>
        {HATCH.map((c) => (
          <path key={c} d={`M${c - 560} 560L${c - 130} 130`} />
        ))}
      </g>
      <path d={OUTER} />
      <path d={MIDDLE} stroke={GREEN} />
      <path d="M482.500 208V542.500M482.500 221.500H740M482.500 542.500H740M733.500 222V542" />
      <path d={INNER} stroke="#f0f060" />
      <path
        d="M482.500 328.500H708M482.500 435.500H708M702.500 222V542M399 221L323 250M330 248L414 461M408 464L482 435.500"
        stroke={GREEN}
      />
      <path
        d="M701 223h3v6h-3zM701 321h3v6h-3zM701 330h3v6h-3zM701 428h3v6h-3zM701 437h3v6h-3zM701 534h3v6h-3zM330 248l1 10 4-2zM414 461l-5-8 3-1z"
        stroke={GREEN}
        fill={GREEN}
      />
      <path d="M733.500 223l-2 7h4zM733.500 541l-2-7h4zM428 142l0-9 4 1zM306 367l8-4 1 3z" fill="#fff" />
      <path d="M441 103L428 142M306 367L345 355M548 297.500h1" />
      <path d="M8 103.500H939M907.500 99V572M903.500 99.500h8v8h-8z" />
      <path d="M23.500 500V551M19.500 510.500h9l-5-11zM19.500 551.500h8v8h-8zM28 555.500H78M68.500 551v9l10-4.500z" />
    </g>
    <g fill="#fff" className="text-[27px]">
      <text x="397" y="221">F</text>
      <text x="489" y="221">A</text>
      <text x="568" y="217">E</text>
      <text x="487" y="329">B</text>
      <text x="486" y="437">C</text>
      <text x="481" y="565">D</text>
      <text x="528" y="256">:5756.1861</text>
      <text x="443" y="479">133.3188</text>
    </g>
    <g fill="#fff" className="text-[17px]">
      <text x="494" y="252">面积</text>
      <text x="410" y="475">周长</text>
    </g>
    <g fill="#fff" className="text-[18px]">
      <text x="20" y="492">Y</text>
      <text x="88" y="562">X</text>
    </g>
    <g fill={GREEN} className="text-[14px]" textAnchor="middle">
      <text transform="translate(699 275) rotate(-90)">31.6667</text>
      <text transform="translate(699 382) rotate(-90)">31.6667</text>
      <text transform="translate(699 490) rotate(-90)">31.6667</text>
      <text transform="translate(376 354) rotate(69)">68.089</text>
    </g>
    <g fill="#fff" className="text-[14px]" textAnchor="middle">
      <text transform="translate(730 382) rotate(-90)">95</text>
      <text transform="translate(332 356) rotate(-13)">R75</text>
      <text transform="translate(434 113) rotate(-70)">R25</text>
    </g>
  </svg>
);

const NAV: [string, string][] = [
  ["第一个", "M1 1v8M8 1L4 5l4 4z"],
  ["上一个", "M7 1L3 5l4 4z"],
  ["下一个", "M3 1l4 4-4 4z"],
  ["最后一个", "M9 1v8M2 1l4 4-4 4z"],
];

const Slash = ({ left, right }: { left: string; right: string }) => (
  <svg viewBox="0 0 7 15" className="h-[15px] w-[7px] shrink-0">
    <path d="M0 0h7L0 15z" fill={left} />
    <path d="M7 0v15H0z" fill={right} />
    <path d="M7 0L0 15" stroke={K} />
  </svg>
);

const STATUS: [string, boolean][] = [
  ["捕捉", false], ["栅格", false], ["正交", false], ["极轴", false], ["对象捕捉", true],
  ["对象追踪", true], ["DYN", false], ["线宽", false], ["模型", true],
];

const Prompt = () => (
  <span className="flex w-[39px] shrink-0 gap-[3px]">
    <span>命</span>
    <span>令</span>
    <span>:</span>
  </span>
);

const MONO = "font-['DejaVu_Sans_Mono','Noto_Sans_CJK_SC',monospace]";

export default function App() {
  return (
    <div className="flex min-h-screen flex-col overflow-hidden bg-[#3a6ea5] font-['Noto_Sans_CJK_SC',sans-serif] text-[12px] leading-4 text-black">
      <main className="ml-1 mr-[2px] mb-[6px] flex flex-1 flex-col border-t border-r-2 border-b-2 border-l border-t-white border-r-[#505860] border-b-[#505860] border-l-white bg-[#d4d0c8] pt-[2px] pr-px pb-px pl-[3px]">
        <header className="flex h-[18px] items-center bg-linear-to-r from-[#0a246a] to-[#a6caf0] pr-px pl-px">
          <Icon name="主页" />
          <h1 className="flex-1 font-['Liberation_Mono',monospace] text-[12px] font-bold text-white">
            AutoCAD 2006 - [J:\38.dwg]
          </h1>
          <WinButton label="最小化" d="M1 8h6" />
          <WinButton label="最大化" d="M1 1h8v7H1zM1 2h8" />
          <WinButton label="关闭" d="M1 1l7 7M8 1L1 8" gap />
        </header>
        <nav className="flex h-5 items-center pr-px">
          <Icon name="图形" />
          {MENUS.map(([zh, key]) => (
            <button key={key} className="flex shrink-0 items-center px-[6px] whitespace-nowrap">
              {zh}
              <span className={`text-[10px] ${MONO}`}>
                {zh ? (
                  <>(<u>{key}</u>)</>
                ) : (
                  <>E<u>x</u>press</>
                )}
              </span>
            </button>
          ))}
          <span className="flex-1" />
          <WinButton label="最小化图形" d="M1 8h6" />
          <WinButton label="还原图形" d="M3 4V1h6v5H7M1 4h6v5H1z" />
          <WinButton label="关闭图形" d="M1 1l7 7M8 1L1 8" gap />
        </nav>
        <div className="flex h-7 gap-px overflow-hidden">
          <Bar>
            <Tools items="新建 打开 保存 | 打印 打印预览 发布 | 剪切 复制 粘贴 特性匹配 块编辑器 | 放弃 v 重做 w | 平移 实时缩放 窗口缩放 缩放上一个 | 特性 设计中心 工具选项板 图纸集 标记集 计算器 | 帮助" />
          </Bar>
          <Bar>
            <Tools items="线性标注 对齐标注 弧长标注 坐标标注 | 半径标注 折弯标注 直径标注 角度标注 | 快速标注 基线标注 连续标注 | 快速引线 公差 圆心标记 | 编辑标注" />
          </Bar>
        </div>
        <div className="flex h-7 gap-px overflow-hidden">
          <Bar>
            <Tools items="图层特性" />
            <span className="w-[2px]" />
            <Combo label="图层" value="0" width="w-[297px]">
              <Icon name="灯" />
              <Icon name="太阳" />
              <Icon name="视口冻结" />
              <Icon name="锁" />
              <span className="size-[10px] border border-black" />
            </Combo>
            <Tools items="置为当前 上一图层" />
          </Bar>
          <Bar>
            <span className="w-1" />
            <Combo label="颜色" value="ByLayer" width="w-[148px]">
              <span className="ml-1 size-[10px] border border-black" />
            </Combo>
            <Sep />
            <span className="w-[2px]" />
            <Combo label="线型" value="ByLayer" width="w-[158px]">
              <span className="ml-[2px] h-px w-[60px] bg-black" />
            </Combo>
            <Sep />
            <span className="w-[2px]" />
            <Combo label="线宽" value="ByLayer" width="w-[123px]">
              <span className="ml-[2px] h-px w-[36px] bg-black" />
            </Combo>
            <Sep />
            <span className="w-[2px]" />
            <Combo label="打印样式" value="随颜色" width="w-[118px]" dim />
          </Bar>
        </div>
        <div className="flex flex-1 border-t border-[#606060]">
          <div className="mr-px flex min-w-0 flex-1 flex-col border-r border-b border-white">
            <Drawing />
            <div className="flex h-[15px] items-start">
              {NAV.map(([label, d]) => (
                <button key={label} aria-label={label} className={`flex h-[15px] w-[18px] items-center justify-center ${RAISED}`}>
                  <svg viewBox="0 0 10 10" className="size-[10px]">
                    <path d={d} fill={K} stroke={K} />
                  </svg>
                </button>
              ))}
              <svg viewBox="0 0 7 15" className="ml-1 h-[15px] w-[7px] shrink-0">
                <path d="M0 0h7v15z" fill={K} />
                <path d="M0 0l7 15" stroke={K} />
              </svg>
              <button className="h-[15px] bg-black px-px text-[12px] leading-[14px] text-white">模型</button>
              <Slash left={K} right="#d4d0c8" />
              <button className="h-[15px] border-b border-black px-[3px] text-[12px] leading-[14px]">布局1</button>
              <Slash left="#d4d0c8" right="#d4d0c8" />
              <button className="h-[15px] border-b border-black px-[2px] text-[12px] leading-[14px]">布局2</button>
              <Slash left="#d4d0c8" right="#d4d0c8" />
            </div>
          </div>
          <div className="flex items-start">
            <Column items="直线 构造线 多段线 正多边形 矩形 圆弧 圆 修订云线 样条曲线 椭圆 椭圆弧 插入块 创建块 点 图案填充 渐变色 面域 表格 多行文字" />
            <Column items="删除 复制对象 镜像 偏移 阵列 移动 旋转 缩放 拉伸 修剪 延伸 打断于点 打断 合并 倒角 圆角 分解" />
            <Column items="前置 后置 置于对象之上 置于对象之下" />
          </div>
        </div>
        <div className="mt-[2px] flex h-7 gap-px overflow-hidden">
          <Bar>
            <Tools items="UCS 命名UCS | 上一个UCS | 世界UCS 对象UCS 面UCS 视图UCS | 原点UCS Z轴矢量 三点UCS | 绕X 绕Y 绕Z | 应用UCS" />
          </Bar>
          <Bar>
            <Tools items="曲线" />
          </Bar>
          <Bar>
            <Tools items="命名视图 | 俯视 仰视 左视 右视 主视 后视 | 西南 东南 东北 西北 | 相机 |" />
            <Combo label="视口比例" value="" width="w-[140px]" dim />
          </Bar>
        </div>
        <div className="flex h-7 gap-px overflow-hidden">
          <Bar>
            <Tools items="二维线框 三维线框 消隐 平面着色 体着色 带边框平面 带边框体" />
          </Bar>
          <Bar>
            <Tools items="三维平移 三维缩放 动态观察 连续观察 旋转相机 调整距离 调整剪裁 前向剪裁 后向剪裁 |" />
            <Combo label="命名视图列表" value="" width="w-[140px]" />
          </Bar>
        </div>
        <section className="mt-px flex flex-col border-t border-white pt-[2px]">
          <div className="flex h-[55px] border-t-2 border-b border-t-black border-b-[#808080] pt-1 pr-2 pl-1">
            <span className="flex h-[43px] w-3 shrink-0 gap-px pt-px">
              <span className={`w-[3px] ${RAISED}`} />
              <span className={`w-[3px] ${RAISED}`} />
            </span>
            <div className="flex min-w-0 flex-1 flex-col border-t-2 border-l-2 border-t-black border-l-black font-['Liberation_Mono','Noto_Sans_CJK_SC',monospace] text-[13px] leading-[13px]">
              <div className="flex h-[30px] border-b border-[#808080] bg-white">
                <div className="flex flex-1 flex-col gap-px">
                  <p className="flex gap-2"><Prompt /></p>
                  <p className="flex gap-2"><Prompt />_saveas</p>
                </div>
                <div className="flex flex-col">
                  <button aria-label="上滚" className={`flex h-[15px] w-4 items-center justify-center ${BUTTON3D}`}>
                    <svg viewBox="0 0 5 3" className="h-[3px] w-[5px]"><path d="M0 3h5L2.500 0z" /></svg>
                  </button>
                  <button aria-label="下滚" className={`flex h-[15px] w-4 items-center justify-center ${BUTTON3D}`}>
                    <svg viewBox="0 0 5 3" className="h-[3px] w-[5px]"><path d="M0 0h5L2.500 3z" /></svg>
                  </button>
                </div>
              </div>
              <div className="flex h-4 pr-[17px]">
                <label className="flex flex-1 items-center bg-white">
                  <Prompt />
                  <input aria-label="命令" className="min-w-0 flex-1 bg-transparent outline-none" />
                </label>
                <button aria-label="左滚" className={`ml-[2px] flex w-[15px] items-center justify-center ${BUTTON3D}`}>
                  <svg viewBox="0 0 3 5" className="h-[5px] w-[3px]"><path d="M3 0v5L0 2.500z" /></svg>
                </button>
                <span className={`w-4 ${BUTTON3D}`} />
                <span className="w-[15px] bg-[#e9e7e3]" />
                <button aria-label="右滚" className={`flex w-4 items-center justify-center ${BUTTON3D}`}>
                  <svg viewBox="0 0 3 5" className="h-[5px] w-[3px]"><path d="M0 0v5l3-2.500z" /></svg>
                </button>
              </div>
            </div>
          </div>
        </section>
        <footer className="flex h-[25px] items-center gap-1 border-t border-white pl-1">
          <output className={`mr-px h-[18px] w-[250px] border border-[#808080] pl-px text-[10px] leading-4 whitespace-pre text-[#808080] ${MONO}`}>
            178.2174, 83.1888 , 0.0000
          </output>
          {STATUS.map(([name, on]) => (
            <button
              key={name}
              aria-pressed={on}
              className={`h-[18px] px-px leading-4 ${
                on ? "border border-t-black border-l-black border-b-white border-r-white" : RAISED
              } ${name === "DYN" ? "font-['DejaVu_Sans_Mono',monospace] text-[10px]" : "text-[12px]"}`}
            >
              {name}
            </button>
          ))}
          <span className="flex-1" />
          <button aria-label="工具栏锁定" className={`flex h-[19px] w-6 items-center justify-center ${SUNKEN}`}>
            <Icon name="金锁" />
          </button>
          <button aria-label="状态栏菜单" className="flex w-3 justify-center">
            <svg viewBox="0 0 7 4" className="h-1 w-[7px]"><path d="M0 0h7L3.500 4z" /></svg>
          </button>
          <svg viewBox="0 0 12 12" className="ml-px size-3 self-end">
            <path d="M1 12L12 1M5 12l7-7M9 12l3-3" stroke="#808080" strokeWidth="1.500" />
          </svg>
        </footer>
      </main>
      <footer className="flex h-[30px] shrink-0 items-center border-t border-white bg-[#d4d0c8] pr-[2px] pl-[3px]">
        <button className={`flex h-[22px] w-[46px] items-center ${BUTTON3D}`}>
          <svg viewBox="0 0 18 18" className="size-[18px] shrink-0">
            <path d="M3 4c2-2 4-1 6 0L8 9C6 8 4 8 2 9z" fill="#df5630" />
            <path d="M10 4c2 1 4 1 7 0l-2 6c-2 1-4 0-6-1z" fill="#6db33f" />
            <path d="M2 10c2-1 4-1 6 0l-1 5c-2-1-4-1-6 0z" fill="#4381ce" />
            <path d="M9 10c2 1 4 1 6 1l-1 4c-2 1-4 1-6 0z" fill="#f1c72e" />
          </svg>
          开始
        </button>
        <span className="ml-2 h-5 w-[2px] border-l border-r border-l-[#808080] border-r-white" />
        <span className="ml-[5px] flex">
          <Tools items="浏览器 邮件 文件夹 播放器" />
        </span>
        <span className="flex w-[42px] justify-end pr-2 pb-1 font-['Liberation_Sans'] text-[14px] font-bold">»</span>
        <span className="h-5 w-[2px] border-l border-r border-l-[#808080] border-r-white" />
        <button className="ml-1 flex h-[22px] w-[160px] items-center gap-1 border border-t-[#404040] border-l-[#404040] border-b-white border-r-white bg-[#eae8e4] pl-[3px]">
          <Icon name="主页" />
          <span className={`text-[10px] whitespace-nowrap ${MONO}`}>AutoCAD 2006 - [J:\...</span>
        </button>
        <span className="flex-1" />
        <span className="h-5 w-[2px] border-l border-r border-l-[#808080] border-r-white" />
        <span className="ml-1 flex"><Tools items="键盘" /></span>
        <span className="mr-1 ml-[2px] h-5 w-[2px] border-l border-r border-l-[#808080] border-r-white" />
        <span>桌面</span>
        <span className="mx-[7px] pb-1 font-['Liberation_Sans'] text-[14px] font-bold">»</span>
        <div className={`flex h-[22px] w-[115px] items-center ${SUNKEN}`}>
          <span className="mr-1 ml-1 font-['Liberation_Sans'] text-[14px] font-bold">«</span>
          <Icon name="网络" />
          <Icon name="杀毒" />
          <Icon name="地球" />
          <time className={`ml-2 text-[10px] ${MONO}`}>9:35</time>
        </div>
      </footer>
    </div>
  );
}
